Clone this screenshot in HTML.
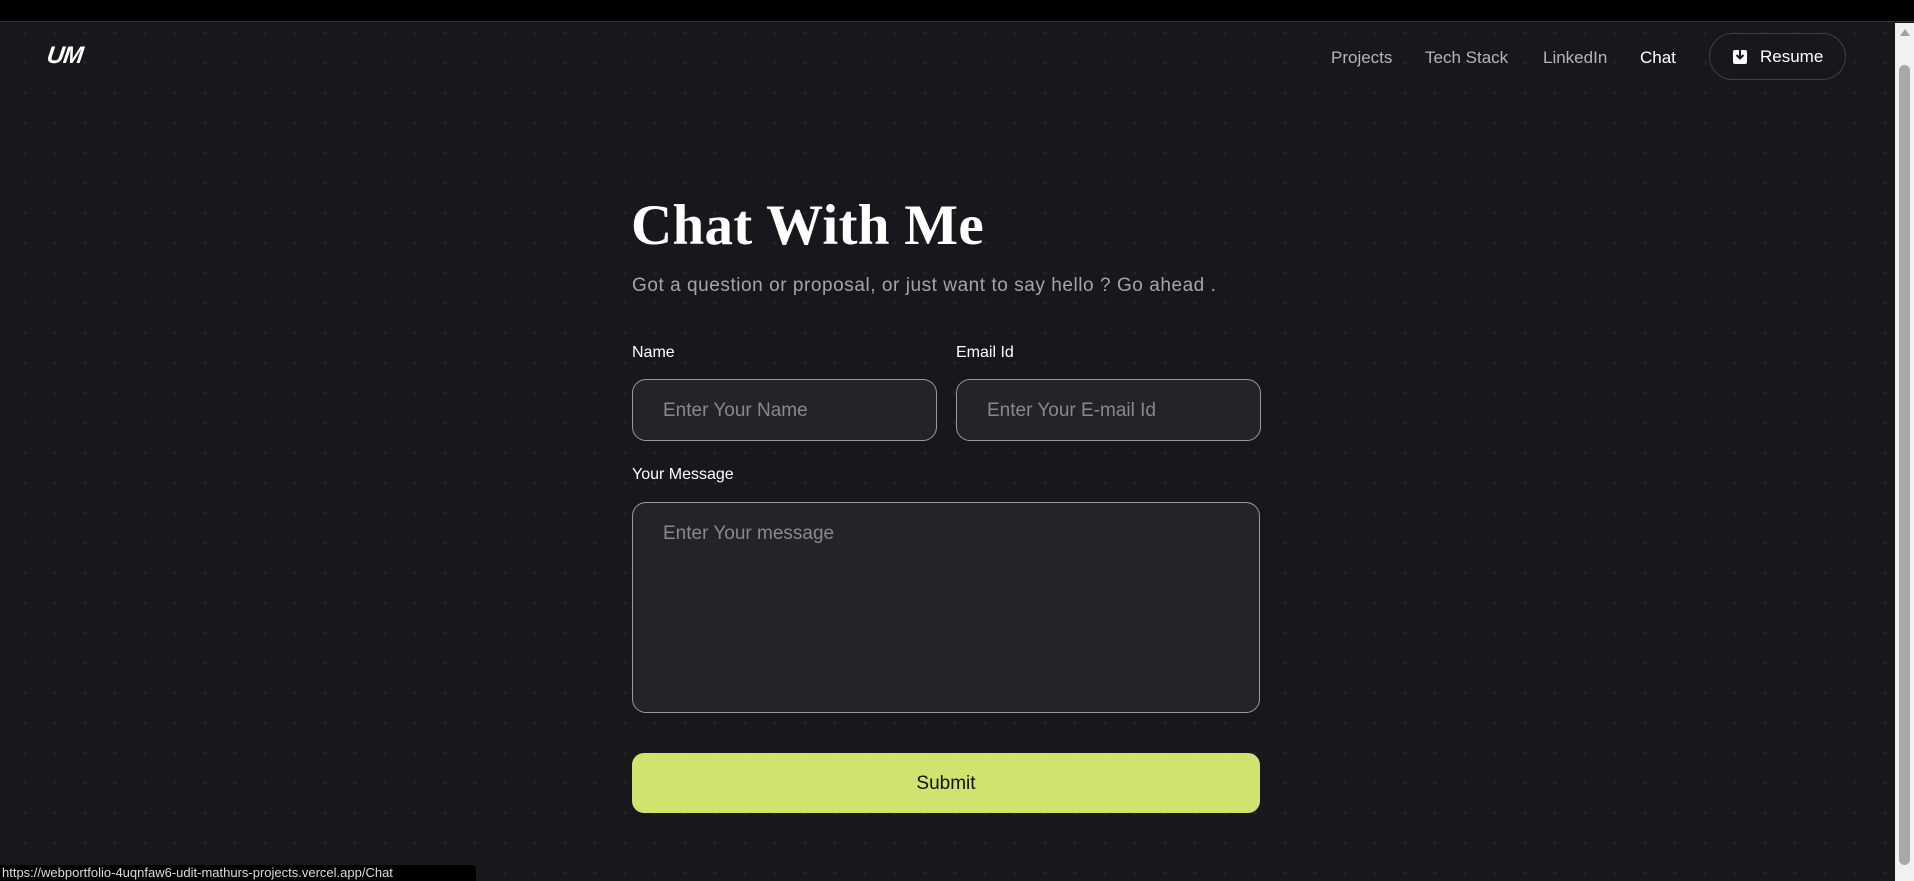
<!DOCTYPE html>
<html><head><meta charset="utf-8"><style>
*{margin:0;padding:0;box-sizing:border-box}
body{width:1914px;height:881px;overflow:hidden;background:#18181c;font-family:"Liberation Sans",sans-serif;position:relative}
.bg{position:absolute;left:0;top:23px;width:1895px;height:858px;background-color:#18181c;background-image:radial-gradient(circle,#232329 1.6px,transparent 2.2px);background-size:30px 30px;background-position:10px -5px}
.top{position:absolute;left:0;top:0;width:1914px;height:22px;background:#000;border-bottom:1px solid #333}
.sb{position:absolute;right:0;top:23px;width:19px;height:858px;background:#f1f1f1}
.sb .thumb{position:absolute;left:4px;top:42px;width:11px;height:800px;background:#a8a8a8;border-radius:6px}
.sb .arr{position:absolute;left:5px;top:6px;width:0;height:0;border-left:5px solid transparent;border-right:5px solid transparent;border-bottom:7px solid #a0a0a0}
.logo{position:absolute;left:47px;top:42px;color:#fff;font:italic 900 24px "Liberation Sans",sans-serif;letter-spacing:-1px;transform:skewX(-8deg)}
.nav{position:absolute;top:48px;font-size:17px;color:#b4b4bc}
.resume{position:absolute;left:1709px;top:33px;width:137px;height:47px;border:1px solid #3e3e44;border-radius:24px;background:#18181c;color:#fff;font-size:17px}
.resume span{position:absolute;left:50px;top:13px}
.resume svg{position:absolute;left:23px;top:14px}
h1{position:absolute;left:631px;top:193px;font:bold 57px "Liberation Serif",serif;color:#fff;letter-spacing:0.3px}
.sub{position:absolute;left:632px;top:275px;font-size:19px;color:#a4a4b0;letter-spacing:0.55px}
.lbl{position:absolute;font-size:16px;color:#fff}
.inp{position:absolute;background:#232328;border:1px solid #9a9a9e;border-radius:14px;color:#88888e;font-size:19px}
.inp span{position:absolute;left:30px;top:20px}
.btn{position:absolute;left:632px;top:753px;width:628px;height:60px;background:#d2e26f;border-radius:12px;color:#111;font-size:19px;text-align:center;line-height:62px}
.status{position:absolute;left:0;top:865px;width:476px;height:16px;background:#000;color:#ddd;font-size:13px;line-height:16px;padding-left:2px;border-top-right-radius:4px;white-space:nowrap;overflow:hidden}
</style></head><body>
<div class="bg"></div>
<div class="top"></div>
<div class="logo">UM</div>
<div class="nav" style="left:1331px">Projects</div>
<div class="nav" style="left:1425px">Tech Stack</div>
<div class="nav" style="left:1543px">LinkedIn</div>
<div class="nav" style="left:1640px;color:#fff">Chat</div>
<div class="resume"><svg width="14" height="16" viewBox="0 0 14 16"><rect x="0" y="2" width="14" height="14" rx="2" fill="#fff"/><path d="M7 0v10M3.5 7L7 10.5 10.5 7" stroke="#18181c" stroke-width="2" fill="none"/></svg><span>Resume</span></div>
<h1>Chat With Me</h1>
<div class="sub">Got a question or proposal, or just want to say hello ? Go ahead .</div>
<div class="lbl" style="left:632px;top:344px">Name</div>
<div class="lbl" style="left:956px;top:344px">Email Id</div>
<div class="inp" style="left:632px;top:379px;width:305px;height:62px"><span>Enter Your Name</span></div>
<div class="inp" style="left:956px;top:379px;width:305px;height:62px"><span>Enter Your E-mail Id</span></div>
<div class="lbl" style="left:632px;top:466px">Your Message</div>
<div class="inp" style="left:632px;top:502px;width:628px;height:211px"><span>Enter Your message</span></div>
<div class="btn">Submit</div>
<div class="sb"><div class="arr"></div><div class="thumb"></div></div>
<div class="status">https://webportfolio-4uqnfaw6-udit-mathurs-projects.vercel.app/Chat</div>
</body></html>
